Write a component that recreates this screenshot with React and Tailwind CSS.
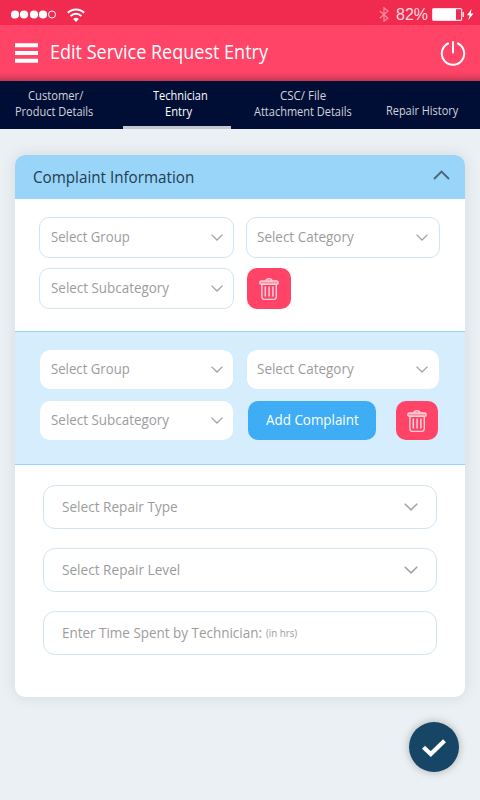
import { useLayoutEffect, useRef, useState } from "react";

// One line of text condensed horizontally to an exact width.
function Fit({ width, className = "", children }) {
  const ref = useRef(null);
  const [scale, setScale] = useState(1);
  useLayoutEffect(() => {
    setScale(width / ref.current.offsetWidth);
  }, [width]);
  return (
    <span className={`block shrink-0 whitespace-nowrap ${className}`} style={{ width }}>
      <span ref={ref} className="inline-block origin-left" style={{ transform: `scaleX(${scale})` }}>
        {children}
      </span>
    </span>
  );
}

function Chevron({ className = "w-3 h-[7px]" }) {
  return (
    <svg viewBox="0 0 12 7" className={`shrink-0 ${className}`} fill="none" stroke="#a2a2a2" strokeWidth="1.3">
      <path d="M0.5 0.6 6 6 11.5 0.6" />
    </svg>
  );
}

function Trash() {
  return (
    <svg viewBox="0 0 20 22" className="h-[22px] w-5" fill="none" stroke="#ffd3db" strokeWidth="1.4" strokeLinejoin="round">
      <path d="M7 2.900C7.200 1.300 8.200.8 10 .8s2.800.5 3 2.100" />
      <rect x="0.8" y="3" width="18.400" height="3.300" rx="1.650" fill="#ff8ea3" />
      <path d="M2.900 7V18.800a2.600 2.600 0 0 0 2.600 2.600H14.700a2.600 2.600 0 0 0 2.600-2.600V7" />
      <path d="M6.300 8.500v10M10.100 8.500v10M13.900 8.500v10" strokeWidth="1.500" />
    </svg>
  );
}

function Select({ label, width, box }) {
  return (
    <div className={`flex items-center justify-between rounded-[10px] bg-white pb-[2px] text-[15px] leading-5 text-[#9c9c9c] ${box}`}>
      <Fit width={width} className="mb-0.5">{label}</Fit>
      <Chevron className="mt-0.5 h-[7px] w-3" />
    </div>
  );
}

function WideField({ children, chevron }) {
  return (
    <div className="flex h-11 items-center justify-between rounded-xl border border-[#d2e4f0] bg-white pr-[18px] pl-[18px] text-[15px] leading-5 text-[#9c9c9c]">
      <div className="flex items-center pb-[3px]">{children}</div>
      {chevron && <Chevron className="h-2 w-3.5" />}
    </div>
  );
}

function StatusBar() {
  return (
    <div className="flex h-[25px] items-center bg-[#f02b4f] pt-[4px] pl-[11px] pr-[6px]">
      <svg viewBox="0 0 46 9" className="h-[9px] w-[46px]" fill="#fff">
        <circle cx="4" cy="4.500" r="4.100" />
        <circle cx="13" cy="4.500" r="4.100" />
        <circle cx="23" cy="4.500" r="4.100" />
        <circle cx="32" cy="4.500" r="4.100" />
        <circle cx="41" cy="4.500" r="3.500" fill="none" stroke="#fff" strokeWidth="1" />
      </svg>
      <svg viewBox="0 0 18 14" className="ml-[10px] h-3.5 w-[18px]" fill="none" stroke="#fff" strokeWidth="2">
        <path d="M.8 4.800a11.600 11.600 0 0 1 16.400 0" />
        <path d="M3.600 8.100a7.600 7.600 0 0 1 10.800 0" />
        <path d="M6.200 11a4 4 0 0 1 5.600 0L9 13.900z" fill="#fff" stroke="none" />
      </svg>
      <svg viewBox="0 0 10 15" className="ml-auto h-[15px] w-2.5" fill="none" stroke="#f98a9f" strokeWidth="1.200">
        <path d="M.8 4 9 11.200 5 14.200V.8L9 4 .8 11.200" />
      </svg>
      <Fit width={32} className="mb-px ml-[7px] font-['Liberation_Sans',sans-serif] text-[16.500px] leading-5 text-[#ffd9df]">82%</Fit>
      <svg viewBox="0 0 42 13" className="ml-[4px] h-[13px] w-[42px]">
        <rect x=".6" y=".6" width="29" height="11.800" rx="1.200" fill="none" stroke="#ffdce2" strokeWidth="1.200" />
        <rect x="1" y="1" width="23" height="11" fill="#fff" />
        <path d="M30.500 4H32v5h-1.500z" fill="#ffe3e8" />
        <path d="M39.500 1 35 7.200h2.600L36.200 12.300l5.300-6.800h-2.700z" fill="#fff" />
      </svg>
    </div>
  );
}

function TabBar() {
  return (
    <nav className="flex h-12 bg-[#000e35] text-[12px] leading-4 text-[#d2d4da]">
      <div className="flex w-[123px] flex-col items-center pt-[7px] pr-[15px]">
        <Fit width={55} className="ml-[3px]">Customer/</Fit>
        <Fit width={78}>Product Details</Fit>
      </div>
      <div className="flex w-[108px] flex-col items-center border-b-[3px] border-[#c5c8d1] pt-[7px] pl-1.5 font-medium text-white">
        <Fit width={55}>Technician</Fit>
        <Fit width={27} className="-ml-[3px]">Entry</Fit>
      </div>
      <div className="flex w-[144px] flex-col items-center pt-[7px] pr-[1px]">
        <Fit width={46}>CSC/ File</Fit>
        <Fit width={98}>Attachment Details</Fit>
      </div>
      <div className="flex flex-1 flex-col pt-[22px] pl-[11px]">
        <Fit width={72}>Repair History</Fit>
      </div>
    </nav>
  );
}

export default function App() {
  return (
    <div className="relative h-[800px] w-[480px] overflow-hidden bg-[#eaf0f3] font-['Open_Sans','Noto_Sans',sans-serif]">
      <StatusBar />
      <header className="flex h-14 items-center bg-linear-to-b from-[#ff4467] from-84% via-[#ec3f5f] via-92% to-[#c43751] pr-[14px] pl-[15px] text-white">
        <svg viewBox="0 0 23 20" className="h-5 w-[23px]" fill="#fff">
          <path d="M0 .3h23v4H0zM0 8h23v4H0zM0 15.700h23v4H0z" />
        </svg>
        <Fit width={218} className="mb-0.5 ml-3 text-[19.500px] leading-7">Edit Service Request Entry</Fit>
        <svg viewBox="0 0 26 26" className="ml-auto h-[26px] w-[26px]" fill="none" stroke="#fff" strokeWidth="2" strokeLinecap="round">
          <path d="M8 3.500A11.200 11.200 0 1 0 18 3.500M13 2v10.500" />
        </svg>
      </header>
      <TabBar />

      <main className="mx-[15px] mt-[26px] h-[542px] rounded-[10px] bg-white shadow-[0_0_14px_rgba(60,80,90,0.13)]">
        <div className="flex h-11 items-center justify-between rounded-t-[10px] bg-[#99d4f9] pr-[15px] pl-[18px]">
          <Fit width={161} className="text-[17px] leading-6 text-[#213c4f]">Complaint Information</Fit>
          <svg viewBox="0 0 17 10" className="mb-1 h-2.5 w-[17px]" fill="none" stroke="#49677b" strokeWidth="1.900">
            <path d="M1 9 8.500 1.500 16 9" />
          </svg>
        </div>

        <section className="grid h-[132px] grid-cols-[195px_194px] content-start gap-x-3 gap-y-2.5 pt-[18px] pl-6">
          <Select label="Select Group" width={79} box="h-[41px] border border-[#d2e4f0] pl-[11px] pr-[10px]" />
          <Select label="Select Category" width={97} box="h-[41px] border border-[#d2e4f0] pl-[10px] pr-[11px]" />
          <Select label="Select Subcategory" width={118} box="h-[41px] border border-[#d2e4f0] pl-[11px] pr-[10px]" />
          <button className="ml-px flex h-[41px] w-11 items-center justify-center rounded-[10px] bg-[#ff4467] pt-px">
            <Trash />
          </button>
        </section>

        <section className="h-[134px] border-y border-[#97d3f8] bg-[#d6edfd] pt-[18px] pl-[25px]">
          <div className="flex gap-3.5">
            <Select label="Select Group" width={79} box="h-[39px] w-[193px] pl-[11px] pr-[10px]" />
            <Select label="Select Category" width={97} box="h-[39px] w-[192px] pl-[10px] pr-[11px]" />
          </div>
          <div className="mt-3 flex">
            <Select label="Select Subcategory" width={118} box="h-[39px] w-[193px] pl-[11px] pr-[10px]" />
            <button className="ml-[15px] flex h-[39px] w-32 items-center justify-center rounded-[10px] bg-[#3eadf6] pb-[4px] pl-px text-[15px] leading-5 font-medium text-white">
              <Fit width={93}>Add Complaint</Fit>
            </button>
            <button className="ml-5 flex h-[39px] w-[42px] items-center justify-center rounded-[10px] bg-[#ff4467] pt-px">
              <Trash />
            </button>
          </div>
        </section>

        <section className="flex flex-col gap-[19px] px-7 pt-5">
          <WideField chevron><Fit width={116}>Select Repair Type</Fit></WideField>
          <WideField chevron><Fit width={118}>Select Repair Level</Fit></WideField>
          <WideField>
            <Fit width={200}>Enter Time Spent by Technician:</Fit>
            <Fit width={31} className="ml-1 pt-[2px] text-[10px]">(in hrs)</Fit>
          </WideField>
        </section>
      </main>

      <button className="absolute top-[722px] left-[409px] flex h-[50px] w-[50px] items-center justify-center rounded-full bg-[#164565] shadow-[0_0_8px_rgba(0,0,0,0.28)]">
        <svg viewBox="0 0 24 18" className="mt-0.5 h-[18px] w-6" fill="none" stroke="#fff" strokeWidth="4.200">
          <path d="M1.500 8.200 8.800 15 22.500 1.700" />
        </svg>
      </button>
    </div>
  );
}
